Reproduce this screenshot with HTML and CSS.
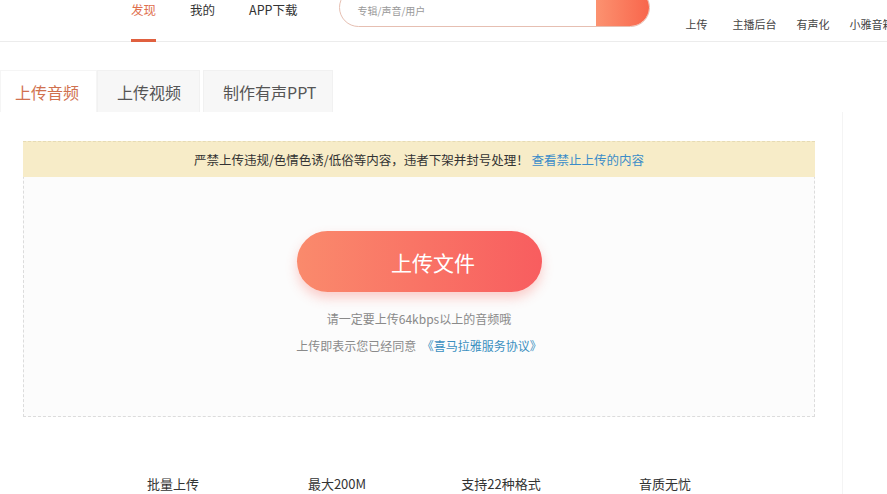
FILE: index.html
```html
<!DOCTYPE html>
<html lang="zh-CN">
<head>
    <meta charset="UTF-8">
    <meta name="viewport" content="width=device-width, initial-scale=1.0">
    <title>上传音频</title>
    <link rel="stylesheet" href="styles.css">
</head>
<body>
    <div class="header">
        <div class="nav">
            <a class="nav-item active" href="#">发现</a>
            <a class="nav-item" href="#">我的</a>
            <a class="nav-item" href="#">APP下载</a>
        </div>
        <div class="search">
            <span class="search-input">专辑/声音/用户</span>
            <span class="search-btn"></span>
        </div>
        <div class="links">
            <a href="#">上传</a>
            <a href="#">主播后台</a>
            <a href="#">有声化</a>
            <a href="#">小雅音箱</a>
        </div>
    </div>

    <div class="tabs">
        <div class="tab active">上传音频</div>
        <div class="tab">上传视频</div>
        <div class="tab">制作有声PPT</div>
    </div>

    <div class="panel">
        <div class="card">
            <div class="notice">严禁上传违规/色情色诱/低俗等内容，违者下架并封号处理！ <a href="#">查看禁止上传的内容</a></div>
            <div class="upload">
                <button class="upload-btn" type="button">上传文件</button>
                <p class="tip">请一定要上传64kbps以上的音频哦</p>
                <p class="tip">上传即表示您已经同意 &nbsp;<a href="#">《喜马拉雅服务协议》</a></p>
            </div>
        </div>
        <div class="features">
            <span>批量上传</span>
            <span>最大200M</span>
            <span>支持22种格式</span>
            <span>音质无忧</span>
        </div>
    </div>
</body>
</html>
```

FILE: styles.css
```css
body {
    margin: 0;
    background-color: #fff;
    font-family: "Noto Sans CJK SC", "Liberation Sans", sans-serif;
    color: #333;
    overflow: hidden;
}
a { text-decoration: none; color: inherit; }

.header {
    display: flex;
    align-items: flex-start;
    height: 42px;
    box-sizing: border-box;
    border-bottom: 1px solid #ececec;
    white-space: nowrap;
}
.header > * { flex-shrink: 0; }
.nav {
    display: flex;
    gap: 34px;
    margin-left: 131px;
}
.nav-item {
    display: block;
    height: 42px;
    box-sizing: border-box;
    font-size: 12.5px;
    line-height: 20px;
    color: #333;
    border-bottom: 3px solid transparent;
}
.nav-item.active {
    color: #e0704f;
    border-bottom-color: #e0603f;
}
.search {
    display: flex;
    margin-left: 42px;
    margin-top: -12px;
    width: 311px;
    height: 39px;
    box-sizing: border-box;
    border: 1px solid #e6bfb2;
    border-radius: 20px;
    overflow: hidden;
}
.search-input {
    flex: 1;
    padding: 14px 0 0 17px;
    font-size: 10px;
    color: #999;
}
.search-btn {
    width: 53px;
    background: linear-gradient(90deg, #fc9270, #f8664c);
}
.links {
    display: flex;
    gap: 20px;
    margin-left: 35px;
    margin-top: 16px;
    font-size: 11px;
    line-height: 16px;
    color: #444;
}
.links a:first-child { margin-right: 5px; }

.tabs {
    display: flex;
    margin-top: 28px;
    height: 42px;
}
.tab {
    padding: 0 18px 0 19px;
    font-size: 16px;
    line-height: 42px;
    color: #555;
    background-color: #f7f7f7;
    border: 1px solid #f1f1f1;
    border-bottom: none;
    margin-right: 3px;
}
.tab:last-child { padding-right: 16px; }
.tab.active {
    padding: 0 17px 0 14px;
    background-color: #fff;
    color: #d0714f;
    border-color: #f5f5f5;
    margin-right: 0;
}

.panel {
    width: 843px;
    box-sizing: border-box;
    padding: 29px 0 0 23px;
    border-right: 1px solid #f4f4f4;
    height: 400px;
}
.card {
    width: 792px;
    box-sizing: border-box;
    border: 1px dashed #dcdcdc;
    background-color: #fcfcfc;
    height: 276px;
}
.notice {
    height: 35px;
    margin: -1px -1px 0;
    background-color: #f7ecc8;
    border-top: 1px dashed #e6dbb5;
    font-size: 12.5px;
    line-height: 35px;
    text-align: center;
    color: #333;
}
.notice a { color: #3b8cc8; }
.upload {
    display: flex;
    flex-direction: column;
    align-items: center;
    padding-top: 54px;
}
.upload-btn {
    width: 245px;
    height: 61px;
    border: none;
    border-radius: 31px;
    padding-left: 34px;
    background: linear-gradient(90deg, #fa8a6c, #f85d5f);
    box-shadow: 0 6px 12px rgba(248, 100, 90, 0.3);
    color: #fff;
    font-family: inherit;
    font-size: 21px;
    margin-bottom: 17px;
}
.tip {
    margin: 0 0 7px;
    font-size: 12px;
    line-height: 20px;
    color: #8a8a8a;
}
.tip a { color: #3a8fc0; }

.features {
    display: grid;
    grid-template-columns: repeat(4, 164px);
    width: 656px;
    margin: 57px 0 0 68px;
    font-size: 13px;
    line-height: 20px;
    text-align: center;
    color: #333;
}
```
